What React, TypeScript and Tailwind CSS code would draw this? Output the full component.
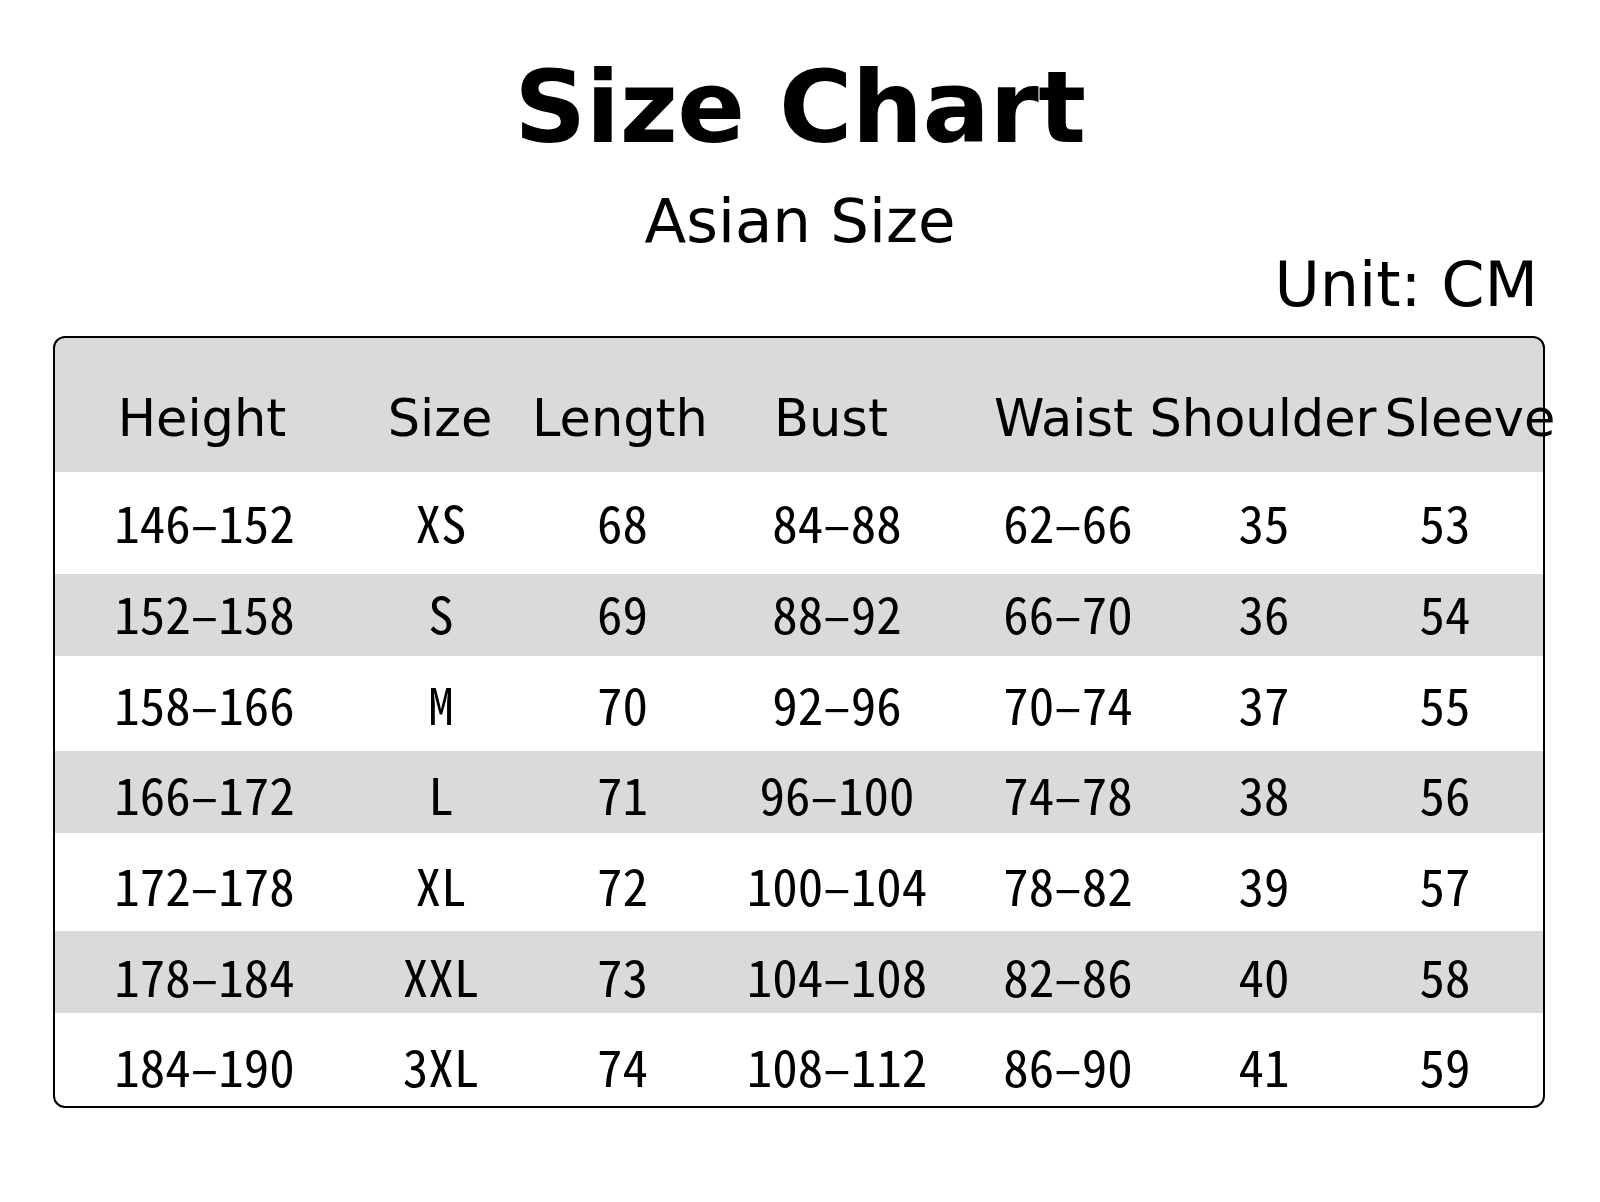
import React from 'react';

type Row = { cells: string[]; gray: boolean; h: string; pt: string };

const headers = ['Height', 'Size', 'Length', 'Bust', 'Waist', 'Shoulder', 'Sleeve'];

// dash between ranges is the long flat one of the original chart
const d = (a: number, b: number) => `${a}\u2013${b}`;

const rows: Row[] = [
  { cells: [d(146, 152), 'XS', '68', d(84, 88), d(62, 66), '35', '53'], gray: false, h: 'h-[102px]', pt: 'pt-[24px]' },
  { cells: [d(152, 158), 'S', '69', d(88, 92), d(66, 70), '36', '54'], gray: true, h: 'h-[82px]', pt: 'pt-[13px]' },
  { cells: [d(158, 166), 'M', '70', d(92, 96), d(70, 74), '37', '55'], gray: false, h: 'h-[95px]', pt: 'pt-[22px]' },
  { cells: [d(166, 172), 'L', '71', d(96, 100), d(74, 78), '38', '56'], gray: true, h: 'h-[82px]', pt: 'pt-[17px]' },
  { cells: [d(172, 178), 'XL', '72', d(100, 104), d(78, 82), '39', '57'], gray: false, h: 'h-[98px]', pt: 'pt-[26px]' },
  { cells: [d(178, 184), 'XXL', '73', d(104, 108), d(82, 86), '40', '58'], gray: true, h: 'h-[82px]', pt: 'pt-[19px]' },
  { cells: [d(184, 190), '3XL', '74', d(108, 112), d(86, 90), '41', '59'], gray: false, h: 'h-[93px]', pt: 'pt-[27px]' },
];

const App: React.FC = () => {
  return (
    <div className="w-[1600px] h-[1202px] bg-white text-black overflow-hidden font-['DejaVu_Sans',sans-serif]">
      <div className="pt-[58px] text-center">
        <h1 className="text-[100px] leading-none font-bold tracking-[-0.5px]">Size Chart</h1>
        <p className="mt-[32px] text-[61px] leading-none">Asian Size</p>
      </div>
      <p className="mt-[3px] pr-[62px] text-right text-[62px] leading-none">Unit: CM</p>

      {/* table */}
      <div className="relative mt-[20px] ml-[53px] w-[1492px] rounded-[12px] bg-white p-[2px]">
        <div className="grid h-[134px] grid-cols-[294px_182px_178px_244px_221px_178px_236px] rounded-t-[10px] bg-[#dadada] pt-[55px]">
          {headers.map(h => (
            <div key={h} className="flex justify-center whitespace-nowrap text-[51px] leading-none">{h}</div>
          ))}
        </div>
        {rows.map((r, i) => (
          <div key={i} className={`grid grid-cols-[299px_174px_189px_240px_222px_170px_192px] ${r.h} ${r.pt} ${r.gray ? 'bg-[#dadada]' : 'bg-white'} ${i === rows.length - 1 ? 'rounded-b-[10px]' : ''}`}>
            {r.cells.map((c, j) => (
              <div key={j} className="flex justify-center whitespace-nowrap text-[51px] leading-none font-['Noto_Sans_CJK_SC',sans-serif] [font-feature-settings:'hwid']">{c}</div>
            ))}
          </div>
        ))}
        <div className="pointer-events-none absolute inset-0 rounded-[12px] border-2 border-black" />
      </div>
    </div>
  );
};

export default App;
